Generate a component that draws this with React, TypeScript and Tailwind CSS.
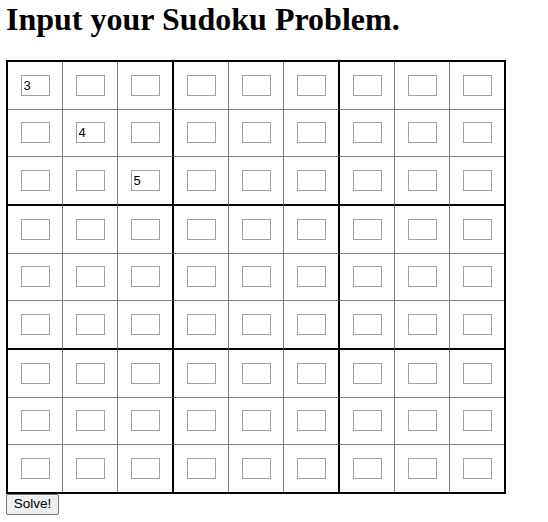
import React from "react";

const initial: Record<string, string> = { "0-0": "3", "1-1": "4", "2-2": "5" };

export default function App() {
  const cells = [];
  for (let r = 0; r < 9; r++) {
    for (let c = 0; c < 9; c++) {
      const right =
        c === 8 ? "" : c === 2 || c === 5 ? "border-r-2 border-r-black" : "border-r border-r-[#808080]";
      const bottom =
        r === 8 ? "" : r === 2 || r === 5 ? "border-b-2 border-b-black" : "border-b border-b-[#808080]";
      const v = initial[`${r}-${c}`] ?? "";
      cells.push(
        <div key={`${r}-${c}`} className={`flex items-center justify-center ${right} ${bottom}`}>
          <input
            defaultValue={v}
            className="w-[29px] h-[21px] border border-[#a0a0a0] bg-white px-[2px] text-[13px] text-black outline-none"
            style={{ fontFamily: '"Liberation Sans", Arial, sans-serif' }}
          />
        </div>
      );
    }
  }
  return (
    <div className="bg-white min-h-[522px] w-[548px]">
      <h1
        className="pl-[6px] pt-[1px] text-[32px] font-bold leading-[37px] text-black"
        style={{ fontFamily: '"Liberation Serif", "Times New Roman", serif' }}
      >
        Input your Sudoku Problem.
      </h1>
      <div className="pl-[6px] pt-[22px]">
        <div className="grid w-[500px] h-[434px] border-2 border-black grid-cols-[55px_55px_56px_55px_55px_56px_55px_55px_54px] grid-rows-[47.667px_47.667px_48.667px_47.667px_47.667px_48.667px_47.667px_47.667px_46.667px]">
          {cells}
        </div>
        <button
          className="flex h-[21px] w-[53px] items-center justify-center rounded-[2px] border border-[#767676] bg-[#efefef] text-[13.5px] text-black"
          style={{ fontFamily: '"Liberation Sans", Arial, sans-serif' }}
        >
          Solve!
        </button>
      </div>
    </div>
  );
}
